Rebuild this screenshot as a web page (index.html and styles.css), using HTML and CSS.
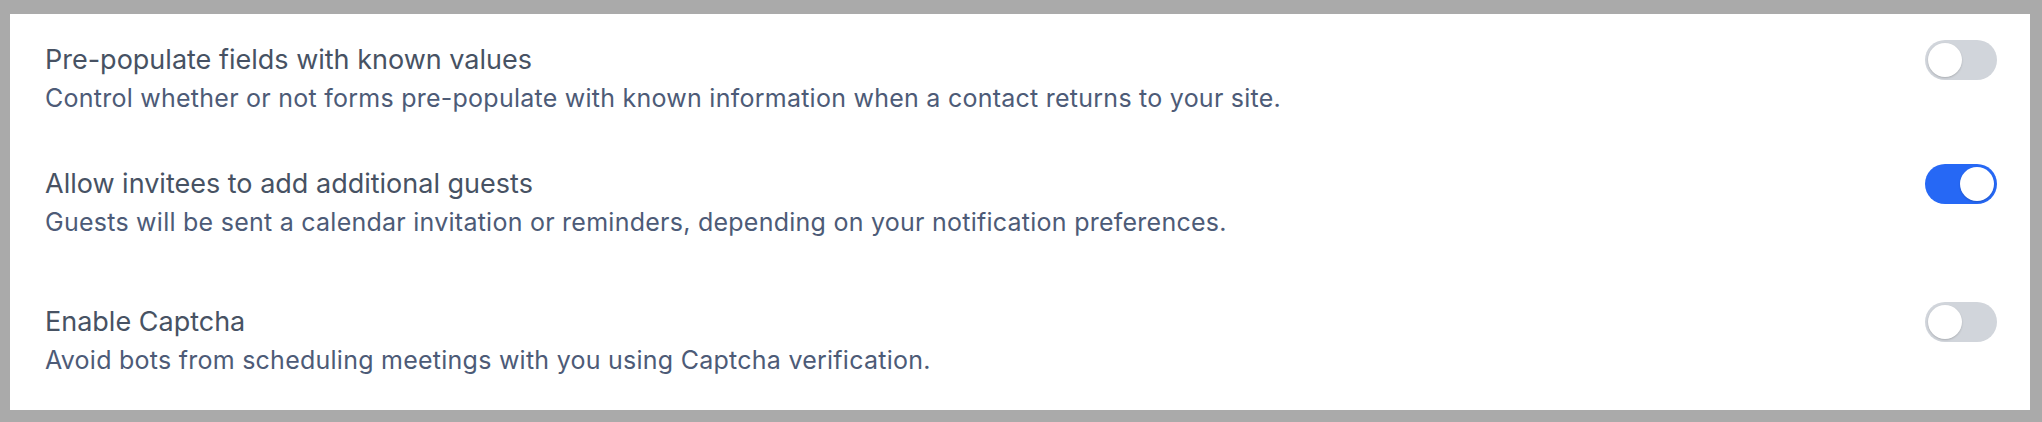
FILE: index.html
```html
<!DOCTYPE html>
<html lang="en">
<head>
<meta charset="utf-8">
<title>Settings</title>
<link rel="stylesheet" href="styles.css">
</head>
<body>
  <main class="card">
    <div class="row">
      <div class="text">
        <div class="title">Pre-populate fields with known values</div>
        <div class="desc">Control whether or not forms pre-populate with known information when a contact returns to your site.</div>
      </div>
      <span class="toggle" role="switch" aria-checked="false"><span class="knob"></span></span>
    </div>
    <div class="row row-wide">
      <div class="text">
        <div class="title">Allow invitees to add additional guests</div>
        <div class="desc">Guests will be sent a calendar invitation or reminders, depending on your notification preferences.</div>
      </div>
      <span class="toggle on" role="switch" aria-checked="true"><span class="knob"></span></span>
    </div>
    <div class="row">
      <div class="text">
        <div class="title">Enable Captcha</div>
        <div class="desc">Avoid bots from scheduling meetings with you using Captcha verification.</div>
      </div>
      <span class="toggle" role="switch" aria-checked="false"><span class="knob"></span></span>
    </div>
  </main>
</body>
</html>
```

FILE: styles.css
```css
* { box-sizing: border-box; }

html, body {
  margin: 0;
  padding: 0;
  height: 100%;
}

body {
  background: #aaaaaa;
  padding: 14px 12px 12px 10px;
  font-family: Inter, "Noto Sans", "Liberation Sans", sans-serif;
}

.card {
  background: #ffffff;
  height: 100%;
  padding: 25px 33px 0 35px;
  display: flex;
  flex-direction: column;
  gap: 48px;
}

.row {
  display: flex;
  align-items: flex-start;
  justify-content: space-between;
}

.row-wide {
  margin-bottom: 14px;
}

.text {
  display: flex;
  flex-direction: column;
}

.title {
  font-size: 27px;
  line-height: 42px;
  color: #475263;
}

.desc {
  font-size: 25px;
  line-height: 34px;
  letter-spacing: 0.25px;
  color: #4d5b77;
}

.toggle {
  flex: none;
  width: 72px;
  height: 40px;
  border-radius: 20px;
  background: #d1d5db;
  padding: 3px;
  margin-top: 1px;
  display: flex;
  justify-content: flex-start;
}

.toggle.on {
  background: #2668f5;
  justify-content: flex-end;
}

.knob {
  width: 34px;
  height: 34px;
  border-radius: 50%;
  background: #ffffff;
  box-shadow: 0 1px 2px rgba(0, 0, 0, 0.18);
}
```
